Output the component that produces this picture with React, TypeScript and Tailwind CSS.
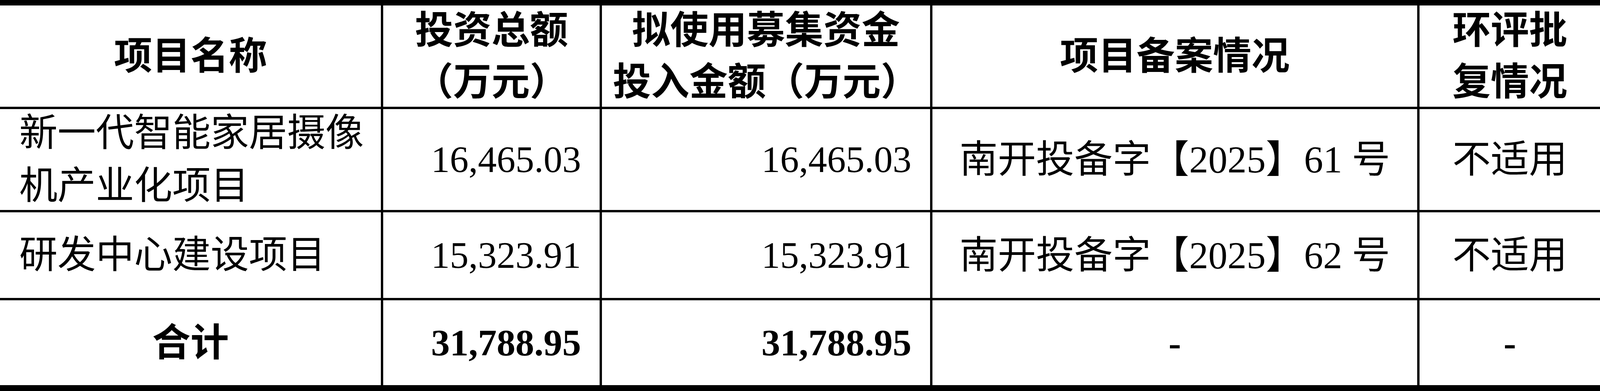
const font = "font-['Liberation_Serif','Noto_Sans_CJK_SC',serif] text-black";

// column widths as shares of the page width (1035/590/892/1316/487 of 4320)
const c1 = "w-[23.96%] shrink-0 border-r-[6px] border-black";
const c2 = "w-[13.66%] shrink-0 border-r-[6px] border-black";
const c3 = "w-[20.65%] shrink-0 border-r-[6px] border-black";
const c4 = "w-[30.46%] shrink-0 border-r-[6px] border-black";
const c5 = "flex-1 min-w-0";

const num = "flex items-center justify-end pr-[1.16%] text-[96px] leading-none";

type Row = {
  name: React.ReactNode;
  total: string;
  raised: string;
  record: string;
  env: string;
};

const rows: Row[] = [
  {
    name: (
      <>
        新一代智能家居摄像
        <br />
        机产业化项目
      </>
    ),
    total: "16,465.03",
    raised: "16,465.03",
    record: "南开投备字【2025】61 号",
    env: "不适用",
  },
  {
    name: "研发中心建设项目",
    total: "15,323.91",
    raised: "15,323.91",
    record: "南开投备字【2025】62 号",
    env: "不适用",
  },
];

export default function App() {
  return (
    <div className={`w-full h-[1000px] overflow-hidden bg-white ${font}`}>
      <div className="w-full flex flex-col border-t-[14px] border-b-[15px] border-black">
        {/* header */}
        <div className="flex h-[265px] border-b-[6px] border-black font-bold text-[98px] leading-[132px]">
          <div className={`${c1} flex items-center justify-center`}>项目名称</div>
          <div className={`${c2} flex items-center justify-center text-center`}>
            <div>
              投资总额
              <br />
              （万元）
            </div>
          </div>
          <div className={`${c3} flex items-center justify-center text-center`}>
            <div>
              拟使用募集资金
              <br />
              投入金额（万元）
            </div>
          </div>
          <div className={`${c4} flex items-center justify-center`}>项目备案情况</div>
          <div className={`${c5} flex items-center justify-center text-center`}>
            <div>
              环评批
              <br />
              复情况
            </div>
          </div>
        </div>

        {rows.map((r, i) => (
          <div
            key={i}
            className={`flex border-b-[6px] border-black text-[98px] ${i === 0 ? "h-[264px]" : "h-[225px]"}`}
          >
            <div className={`${c1} flex items-center pl-[1.2%] leading-[135px]`}>
              <div>{r.name}</div>
            </div>
            <div className={`${c2} ${num}`}>{r.total}</div>
            <div className={`${c3} ${num}`}>{r.raised}</div>
            <div className={`${c4} flex items-center justify-center leading-none whitespace-nowrap`}>
              {r.record}
            </div>
            <div className={`${c5} flex items-center justify-center leading-none`}>{r.env}</div>
          </div>
        ))}

        {/* total */}
        <div className="flex h-[217px] font-bold text-[98px]">
          <div className={`${c1} flex items-center justify-center leading-none`}>合计</div>
          <div className={`${c2} ${num}`}>31,788.95</div>
          <div className={`${c3} ${num}`}>31,788.95</div>
          <div className={`${c4} flex items-center justify-center text-[96px] leading-none`}>-</div>
          <div className={`${c5} flex items-center justify-center text-[96px] leading-none`}>-</div>
        </div>
      </div>
    </div>
  );
}
